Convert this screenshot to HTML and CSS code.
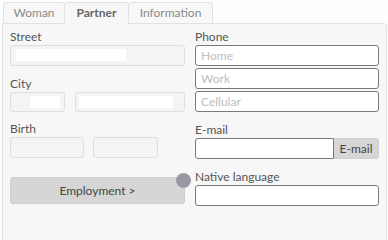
FILE: index.html
```html
<!DOCTYPE html>
<html>
<head>
<meta charset="utf-8">
<link rel="stylesheet" href="styles.css">
</head>
<body>
<div class="tabs">
  <div class="tab t-woman">Woman</div>
  <div class="tab active t-partner">Partner</div>
  <div class="tab t-info">Information</div>
</div>
<div class="panel">
  <div class="col left">
    <div class="label">Street</div>
    <div class="field disabled street"><span class="fill f-street"></span></div>
    <div class="label city-label">City</div>
    <div class="row">
      <div class="field disabled zip"><span class="fill f-zip"></span></div>
      <div class="field disabled city"><span class="fill f-city"></span></div>
    </div>
    <div class="label birth-label">Birth</div>
    <div class="row birth">
      <div class="field disabled b1"></div>
      <div class="field disabled b2"></div>
    </div>
    <div class="btn-wrap">
      <button class="btn">Employment &gt;</button>
      <span class="dot"></span>
    </div>
  </div>
  <div class="col right">
    <div class="label">Phone</div>
    <input class="field phone first" placeholder="Home">
    <input class="field phone" placeholder="Work">
    <input class="field phone" placeholder="Cellular">
    <div class="label gap">E-mail</div>
    <div class="email">
      <input class="field email-input">
      <span class="addon">E-mail</span>
    </div>
    <div class="label gap">Native language</div>
    <input class="field lang">
  </div>
</div>
</body>
</html>
```

FILE: styles.css
```css
html, body {
  margin: 0;
  padding: 0;
  background: #fdfdfd;
  font-family: Lato, "Open Sans", sans-serif;
  font-size: 12px;
  color: #555;
}
.tabs {
  display: flex;
  padding: 2px 0 0 3px;
  height: 21px;
  position: relative;
  z-index: 1;
}
.tab {
  box-sizing: border-box;
  height: 21px;
  border: 1px solid #e2e2e2;
  border-bottom: none;
  border-left: none;
  border-radius: 3px 3px 0 0;
  background: #f8f8f8;
  color: #8a8a8a;
  line-height: 20px;
  font-size: 12px;
  text-align: center;
}
.t-woman { width: 62px; border-left: 1px solid #e2e2e2; }
.t-partner { width: 64px; }
.t-info { width: 84px; }
.tab.active {
  color: #666;
  font-weight: bold;
  height: 22px;
  background: #f7f7f7;
}
.panel {
  box-sizing: border-box;
  margin-left: 2px;
  width: 385px;
  height: 217px;
  border: 1px solid #e2e2e2;
  border-bottom: none;
  border-radius: 0 4px 0 0;
  background: #f7f7f7;
  display: grid;
  grid-template-columns: 175px 184px;
  column-gap: 10px;
  padding: 6px 0 0 7px;
}
.col { display: flex; flex-direction: column; }
.label {
  height: 14px;
  line-height: 14px;
  color: #555;
  margin-bottom: 1px;
}
.label.gap { margin-top: 11px; }
.city-label { margin-top: 11px; }
.birth-label { margin-top: 10px; }
.field {
  box-sizing: border-box;
  height: 21px;
  border: 1px solid #7a7a7a;
  border-radius: 3px;
  background: #fff;
  font: inherit;
  padding: 0 5px;
  margin: 0;
  outline: none;
}
.field::placeholder { color: #bdbdbd; }
.field.disabled {
  border-color: #dedede;
  background: #f4f4f4;
  position: relative;
}
.fill {
  position: absolute;
  background: #fff;
  top: 3px;
  height: 12px;
}
.f-street { left: 5px; width: 110px; }
.f-zip { left: 19px; width: 30px; }
.f-city { left: 3px; width: 94px; }
.row { display: flex; gap: 10px; }
.row .field { height: 20px; }
.birth .field { height: 21px; }
.zip { width: 55px; }
.city { width: 110px; }
.birth { gap: 9px; }
.b1 { width: 74px; }
.b2 { width: 65px; }
.right .phone { margin-top: 2px; }
.right .phone.first { margin-top: 0; }
.email { display: flex; }
.email-input { width: 139px; border-radius: 3px 0 0 3px; }
.addon {
  box-sizing: border-box;
  width: 45px;
  height: 21px;
  line-height: 20px;
  background: #d6d6d6;
  border: 1px solid #d0d0d0;
  border-left: none;
  border-radius: 0 3px 3px 0;
  text-align: center;
  color: #444;
}
.btn-wrap { position: relative; margin-top: 19px; }
.btn {
  box-sizing: border-box;
  width: 175px;
  height: 27px;
  background: #d6d6d6;
  border: 1px solid #cdcdcd;
  border-radius: 3px;
  font: inherit;
  font-size: 12px;
  color: #444;
  padding: 0;
}
.dot {
  position: absolute;
  left: 166px;
  top: -4px;
  width: 15px;
  height: 15px;
  border-radius: 50%;
  background: #9a98a3;
}
```
